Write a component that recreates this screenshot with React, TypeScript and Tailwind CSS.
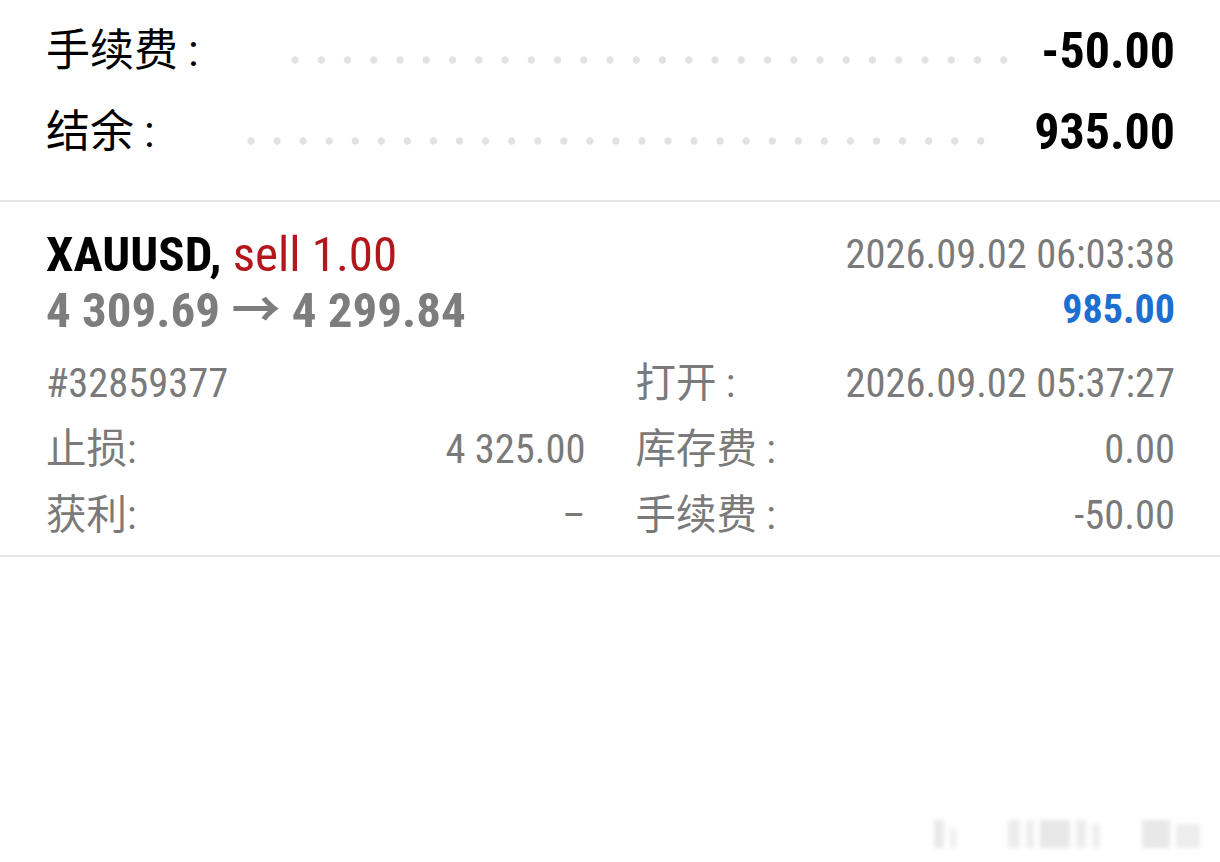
const dots =
  'flex-1 h-[8px] bg-[radial-gradient(circle,#e2e2e2_3.4px,transparent_4px)] bg-[length:26px_8px] bg-repeat-space';

function SummaryRow({ label, value, dotsClass }: { label: string; value: string; dotsClass: string }) {
  return (
    <div className="flex h-[81px] items-center">
      <span className="text-[44px] text-black">{label}</span>
      <div className={`${dots} ${dotsClass}`} />
      <span className="text-[50px] font-bold text-black">{value}</span>
    </div>
  );
}

function Cell({ label, value }: { label: string; value: string }) {
  return (
    <div className="flex h-[66px] items-center justify-between">
      <span className="text-[40.5px]">{label}</span>
      <span className="text-[40.5px]">{value}</span>
    </div>
  );
}

export default function App() {
  return (
    <div className="relative min-h-[862px] bg-white font-['Roboto_Condensed','Noto_Sans_CJK_SC',sans-serif] leading-none">
      {/* account summary */}
      <section className="border-b-2 border-[#e6e6e6] pl-[46px] pr-[45px] pt-[10px] pb-[28px]">
        <SummaryRow label="手续费 :" value="-50.00" dotsClass="ml-[84px] mr-[24px] mt-[18px]" />
        <SummaryRow label="结余 :" value="935.00" dotsClass="ml-[84px] mr-[40px] mt-[18px]" />
      </section>

      {/* closed position */}
      <section className="border-b-2 border-[#e6e6e6] pl-[46px] pr-[45px] pt-[24px] pb-[7px]">
        <div className="flex h-[56px] items-center justify-between">
          <div className="text-[49px]">
            <span className="font-bold text-black">XAUUSD,</span>{' '}
            <span className="text-[#b3161b]">sell 1.00</span>
          </div>
          <span className="text-[40.5px] text-[#7a7a7a]">2026.09.02 06:03:38</span>
        </div>
        <div className="flex h-[56px] items-center justify-between">
          <span className="text-[49px] font-bold text-[#7d7d7d]">4 309.69 → 4 299.84</span>
          <span className="text-[40px] font-bold text-[#1c6fd1]">985.00</span>
        </div>

        <div className="mt-[12px] grid grid-cols-2 gap-x-[50px] text-[#7a7a7a]">
          <div className="flex h-[66px] items-center">
            <span className="text-[40.5px]">#32859377</span>
          </div>
          <Cell label="打开 :" value="2026.09.02 05:37:27" />
          <Cell label="止损:" value="4 325.00" />
          <Cell label="库存费 :" value="0.00" />
          <Cell label="获利:" value="–" />
          <Cell label="手续费 :" value="-50.00" />
        </div>
      </section>

      {/* watermark */}
      <div className="absolute right-[20px] bottom-[14px] flex h-[34px] items-end gap-[6px] opacity-40 blur-[2px]">
        <div className="h-[28px] w-[10px] bg-[#c8c8c8]" />
        <div className="h-[20px] w-[6px] bg-[#d6d6d6]" />
        <div className="w-[40px]" />
        <div className="h-[28px] w-[12px] bg-[#cfcfcf]" />
        <div className="h-[28px] w-[8px] bg-[#d4d4d4]" />
        <div className="h-[28px] w-[30px] bg-[#c4c4c4]" />
        <div className="h-[28px] w-[10px] bg-[#d0d0d0]" />
        <div className="h-[24px] w-[8px] bg-[#d8d8d8]" />
        <div className="w-[30px]" />
        <div className="h-[28px] w-[28px] bg-[#c6c6c6]" />
        <div className="h-[24px] w-[24px] bg-[#d4d4d4]" />
      </div>
    </div>
  );
}
